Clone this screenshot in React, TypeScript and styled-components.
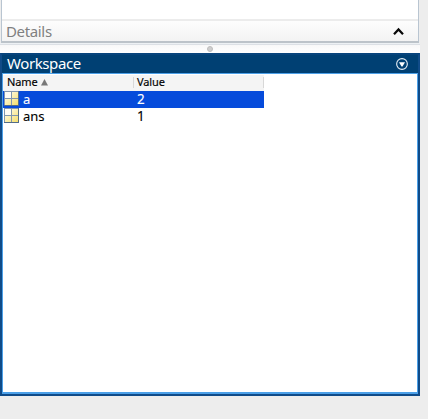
import React from 'react';
import styled, { createGlobalStyle } from 'styled-components';

const GlobalStyle = createGlobalStyle`
  * { box-sizing: border-box; }
  body { margin: 0; background: #ededed; overflow: hidden; font-family: "Noto Sans", "Open Sans", sans-serif; }
`;

const Desktop = styled.main`
  width: 420px;
  height: 419px;
  display: flex;
  flex-direction: column;
  background: #ededed;
`;

const DetailsPanel = styled.section`
  flex: none;
  height: 43px;
  margin-left: 1px;
  width: 418px;
  border: solid #b9c5d1;
  border-width: 0 1px 2px;
  border-bottom-color: #bcc3c9;
  background: #fff;
  padding-top: 19px;
`;

const DetailsBar = styled.div`
  height: 22px;
  border-top: 2px solid #ececec;
  background: linear-gradient(#fdfdfd, #f3f3f3);
  display: flex;
  align-items: center;
  justify-content: space-between;
  padding: 0 13px 0 4px;
`;

const DetailsLabel = styled.span`
  font-size: 15px;
  line-height: 20px;
  letter-spacing: -0.35px;
  color: #808080;
`;

const Splitter = styled.div`
  flex: none;
  height: 10px;
  border-top: 1px solid #edf1f4;
  background: linear-gradient(#dce0e5 0 1px, #f8f8f8 1px, #fff);
  display: flex;
  justify-content: center;
  padding-top: 2px;
`;

const Grip = styled.span`
  width: 6px;
  height: 6px;
  border-radius: 50%;
  background: #cecece;
  border: 1px solid #bdbdbd;
`;

const Workspace = styled.section`
  flex: none;
  height: 343px;
  border: 2px solid #104b88;
  border-top-color: #08447c;
  display: flex;
  flex-direction: column;
`;

const TitleBar = styled.header`
  height: 18px;
  flex: none;
  background: #004073;
  color: #fff;
  display: flex;
  align-items: center;
  justify-content: space-between;
  padding: 0 10px 0 5px;
`;

const Title = styled.h1`
  margin: -2px 0 0;
  font-size: 15px;
  font-weight: 400;
  line-height: 18px;
  letter-spacing: -0.4px;
`;

const Content = styled.div`
  flex: 1;
  background: #fff;
  border: 1px solid #4ca0e8;
  border-bottom-width: 2px;
`;

const Columns = styled.div`
  display: grid;
  grid-template-columns: 131px 130px;
  width: 261px;
`;

const HeadingRow = styled(Columns)`
  height: 17px;
  padding-top: 1px;
  background: linear-gradient(#fff 0 1px, #f4f4f4 1px);
`;

const Heading = styled.div`
  display: flex;
  align-items: center;
  gap: 3px;
  height: 16px;
  padding: 0 0 2px 4px;
  font-size: 11px;
  line-height: 14px;
  color: #000;
  letter-spacing: -0.1px;
  -webkit-text-stroke: 0.15px currentColor;
  background: linear-gradient(#d8d8d8, #d8d8d8) right 2px / 1px 11px no-repeat;

  & + & { padding-left: 3px; }
`;

const VariableRow = styled(Columns)<{ $selected?: boolean }>`
  height: 17px;
  background: ${p => (p.$selected ? '#064bdb' : '#fff')};
  color: ${p => (p.$selected ? '#fff' : '#000')};
`;

const Cell = styled.div`
  display: flex;
  align-items: flex-start;
  gap: 4px;
  padding-left: 1px;
  font-size: 13px;
  line-height: 17px;
  -webkit-text-stroke: 0.1px currentColor;
`;

const ValueCell = styled(Cell)`
  padding-left: 3px;
  font-size: 13.5px;
`;

const MatrixIcon = () => (
  <svg width="15" height="15" viewBox="0 0 15 15" shapeRendering="crispEdges">
    <defs>
      <linearGradient id="cellFill" x1="0" y1="0" x2="1" y2="1">
        <stop offset="0" stopColor="#fffef5" />
        <stop offset="1" stopColor="#f5df6d" />
      </linearGradient>
    </defs>
    <path fill="#8096ae" d="M0 0h15v15H0z" />
    <path fill="#526c88" d="M0 14h15v1H0zM14 0h1v15h-1z" />
    <path fill="#fffdf5" d="M1 1h6v6H1z" />
    <path fill="url(#cellFill)" d="M8 1h6v6H8zM1 8h6v6H1zM8 8h6v6H8z" />
  </svg>
);

const variables = [
  { name: 'a', value: '2', selected: true },
  { name: 'ans', value: '1', selected: false },
];

export default function App() {
  return (
    <Desktop>
      <GlobalStyle />
      <DetailsPanel>
        <DetailsBar>
          <DetailsLabel>Details</DetailsLabel>
          <svg width="12" height="8" viewBox="0 0 12 8" fill="none">
            <path d="M1 7.2 5.5 2.4 10 7.2" stroke="#080808" strokeWidth="2.2" />
          </svg>
        </DetailsBar>
      </DetailsPanel>
      <Splitter><Grip /></Splitter>
      <Workspace>
        <TitleBar>
          <Title>Workspace</Title>
          <svg width="12" height="12" viewBox="0 0 12 12">
            <circle cx="6" cy="6" r="5.35" fill="none" stroke="#e5edf4" strokeWidth="1.1" />
            <path d="M3 4.3h6L6.5 8.4h-1z" fill="#fff" />
          </svg>
        </TitleBar>
        <Content>
          <HeadingRow>
            <Heading>
              Name
              <svg width="7" height="7" viewBox="0 0 7 7"><path d="M3.5 0 7 6.5H0z" fill="#777" /></svg>
            </Heading>
            <Heading>Value</Heading>
          </HeadingRow>
          {variables.map(v => (
            <VariableRow key={v.name} $selected={v.selected}>
              <Cell><MatrixIcon />{v.name}</Cell>
              <ValueCell>{v.value}</ValueCell>
            </VariableRow>
          ))}
        </Content>
      </Workspace>
    </Desktop>
  );
}
